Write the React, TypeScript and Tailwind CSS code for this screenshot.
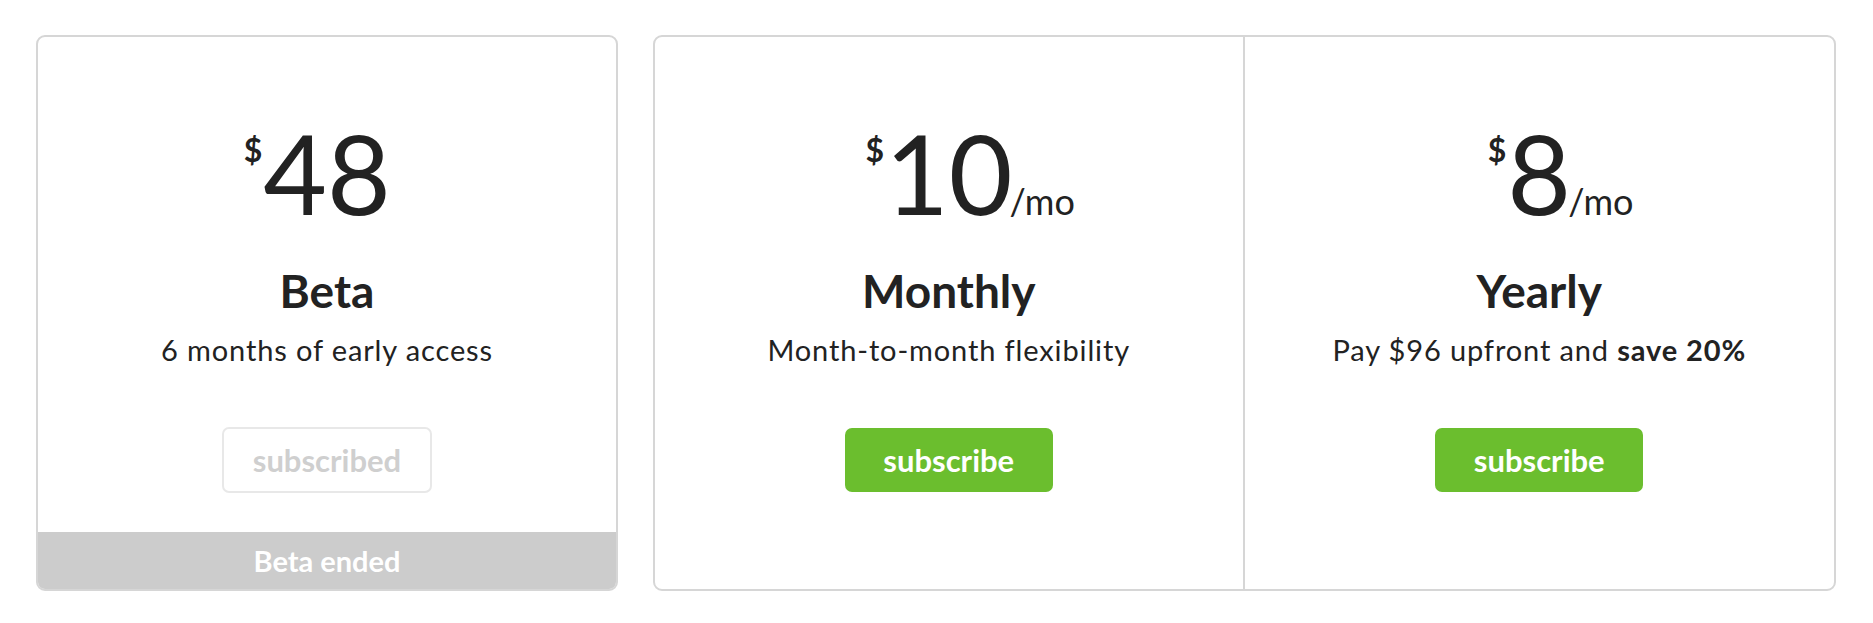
import React from "react";

interface Plan {
  price: string;
  perMonth?: boolean;
  name: string;
  blurb: React.ReactNode;
}

const plans: Plan[] = [
  {
    price: "10",
    perMonth: true,
    name: "Monthly",
    blurb: "Month-to-month flexibility",
  },
  {
    price: "8",
    perMonth: true,
    name: "Yearly",
    blurb: (
      <>
        Pay $96 upfront and <b className="font-bold">save 20%</b>
      </>
    ),
  },
];

// Price: number stays centred, "$" and "/mo" hang off either side
const Price = ({ value, perMonth }: { value: string; perMonth?: boolean }) => (
  <div className="grid grid-cols-[1fr_auto_1fr] items-baseline">
    <span className="justify-self-end self-start mt-[17px] mr-[1px] text-[32px] leading-none font-bold">
      $
    </span>
    <span className="text-[110px] leading-none font-normal">{value}</span>
    <span className="-ml-[3px] text-[36px] leading-none font-normal">
      {perMonth ? "/mo" : ""}
    </span>
  </div>
);

const PlanBody = ({ plan }: { plan: Plan }) => (
  <div className="flex flex-col items-center pt-[80px]">
    <Price value={plan.price} perMonth={plan.perMonth} />
    <h3 className="mt-[41px] text-[46px] leading-none font-bold">{plan.name}</h3>
    <p className="mt-[21px] text-[29px] leading-none tracking-[0.03em]">{plan.blurb}</p>
  </div>
);

export default function App() {
  return (
    <div className="min-h-screen bg-white font-['Lato',sans-serif] text-[#222]">
      <div className="flex gap-[35px] pl-[36px] pt-[35px] h-[591px]">
        {/* Beta card */}
        <div className="w-[582px] flex flex-col rounded-[9px] border-2 border-[#d6d6d6] overflow-hidden">
          <PlanBody plan={{ price: "48", name: "Beta", blurb: "6 months of early access" }} />
          <div className="flex justify-center mt-[63px]">
            <span className="w-[210px] h-[66px] flex items-center justify-center rounded-[7px] border-2 border-[#e8e8e8] text-[31px] font-bold text-[#cfcfcf]">
              subscribed
            </span>
          </div>
          <div className="mt-auto h-[57px] bg-[#cccccc] flex items-center justify-center text-white text-[29px] font-bold">
            Beta ended
          </div>
        </div>

        {/* Monthly / Yearly card */}
        <div className="w-[1183px] grid grid-cols-2 rounded-[9px] border-2 border-[#d6d6d6]">
          {plans.map((plan, i) => (
            <div
              key={plan.name}
              className={i === 0 ? "border-r-2 border-[#d6d6d6]" : ""}
            >
              <PlanBody plan={plan} />
              <div className="flex justify-center mt-[64px]">
                <button className="w-[208px] h-[64px] rounded-[7px] bg-[#6bbe2e] text-white text-[31px] font-bold">
                  subscribe
                </button>
              </div>
            </div>
          ))}
        </div>
      </div>
    </div>
  );
}
